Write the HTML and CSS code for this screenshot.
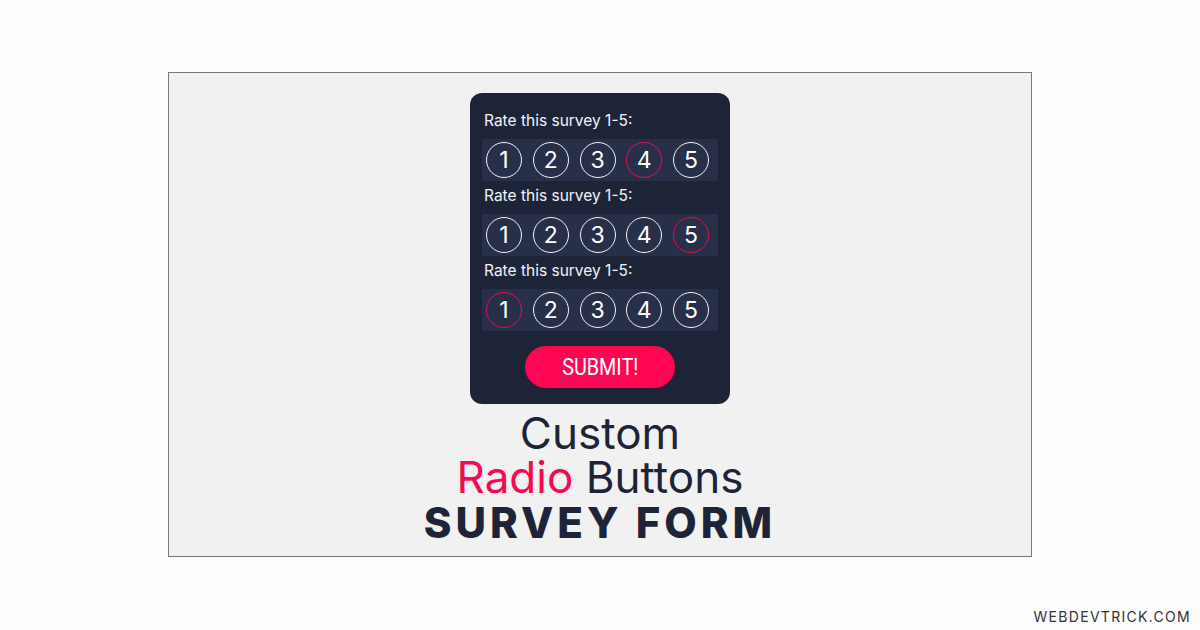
FILE: index.html
```html
<!DOCTYPE html>
<html lang="en">
<head>
  <meta charset="UTF-8">
  <meta name="viewport" content="width=device-width, initial-scale=1.0">
  <title>Custom Radio Buttons | Survey Form</title>
  <link rel="stylesheet" href="styles.css">
</head>
<body>

  <section class="frame">

    <form class="survey">

      <div class="question">
        <p class="question-label">Rate this survey 1-5:</p>
        <div class="rating">
          <label><input type="radio" name="q1" value="1"><span>1</span></label>
          <label><input type="radio" name="q1" value="2"><span>2</span></label>
          <label><input type="radio" name="q1" value="3"><span>3</span></label>
          <label><input type="radio" name="q1" value="4" checked><span>4</span></label>
          <label><input type="radio" name="q1" value="5"><span>5</span></label>
        </div>
      </div>

      <div class="question">
        <p class="question-label">Rate this survey 1-5:</p>
        <div class="rating">
          <label><input type="radio" name="q2" value="1"><span>1</span></label>
          <label><input type="radio" name="q2" value="2"><span>2</span></label>
          <label><input type="radio" name="q2" value="3"><span>3</span></label>
          <label><input type="radio" name="q2" value="4"><span>4</span></label>
          <label><input type="radio" name="q2" value="5" checked><span>5</span></label>
        </div>
      </div>

      <div class="question">
        <p class="question-label">Rate this survey 1-5:</p>
        <div class="rating">
          <label><input type="radio" name="q3" value="1" checked><span>1</span></label>
          <label><input type="radio" name="q3" value="2"><span>2</span></label>
          <label><input type="radio" name="q3" value="3"><span>3</span></label>
          <label><input type="radio" name="q3" value="4"><span>4</span></label>
          <label><input type="radio" name="q3" value="5"><span>5</span></label>
        </div>
      </div>

      <button type="button" class="submit"><span>SUBMIT!</span></button>
    </form>

    <h1 class="title">
      <span class="title-line">Custom</span>
      <span class="title-line"><span class="accent">Radio</span> Buttons</span>
      <span class="title-line title-strong">SURVEY FORM</span>
    </h1>

  </section>

  <div class="brand">WEBDEVTRICK.COM</div>
</body>
</html>
```

FILE: styles.css
```css
body{
  margin: 0; padding: 72px 0 0; box-sizing: border-box;
  background-color: #fdfdfd;
  height: 630px;
  font-family: 'Inter', 'Open Sans', sans-serif;
}

section.frame{
  width: 862px;
  height: 463px;
  margin: 0 auto;
  border: 1px solid #777;
  background-color: #f0f1f0;
  padding-top: 20px;
  box-sizing: content-box;
  display: flex;
  flex-direction: column;
  align-items: center;
}

form.survey{
  width: 260px;
  box-sizing: border-box;
  background-color: #1e2438;
  border-radius: 12px;
  padding: 18px 12px 16px;
  display: flex;
  flex-direction: column;
}

form.survey div.question + div.question{
  margin-top: 5px;
}

form.survey p.question-label{
  margin: 0 0 8px;
  padding-left: 2px;
  font-size: 15.5px;
  line-height: 20px;
  color: #f2f3f6;
}

form.survey div.rating{
  height: 42px;
  background-color: #283049;
  display: flex;
  align-items: center;
  gap: 10.75px;
  padding-left: 4px;
}

form.survey div.rating input{
  display: none;
}

form.survey div.rating span{
  width: 36px;
  height: 36px;
  box-sizing: border-box;
  border: 1.5px solid #f4f4f6;
  border-radius: 50%;
  display: flex;
  align-items: center;
  justify-content: center;
  color: #fff;
  font-size: 23px;
  cursor: pointer;
}

form.survey div.rating input:checked + span{
  border-color: #f0094f;
}

form.survey button.submit{
  margin: 15px auto 0;
  width: 150px;
  height: 42px;
  padding: 0;
  border: none;
  border-radius: 21px;
  background-color: #ff0552;
  color: #fff;
  font-family: 'Roboto', sans-serif;
  font-size: 23px;
  cursor: pointer;
}

form.survey button.submit span{
  display: inline-block;
  transform: scaleX(0.86);
}

h1.title{
  margin: 7px 0 0;
  text-align: center;
  color: #1e2338;
  font-weight: 400;
  display: flex;
  flex-direction: column;
  align-items: center;
}

h1.title span.title-line{
  font-size: 44px;
  line-height: 44px;
}

h1.title span.accent{
  color: #f50a52;
}

h1.title span.title-strong{
  margin-top: 2px;
  font-weight: 800;
  font-size: 42px;
  letter-spacing: 4px;
}

.brand{
  margin-top: 51px;
  padding-right: 9px;
  text-align: right;
  font-size: 14px;
  letter-spacing: 1.3px;
  color: #333;
}
```
